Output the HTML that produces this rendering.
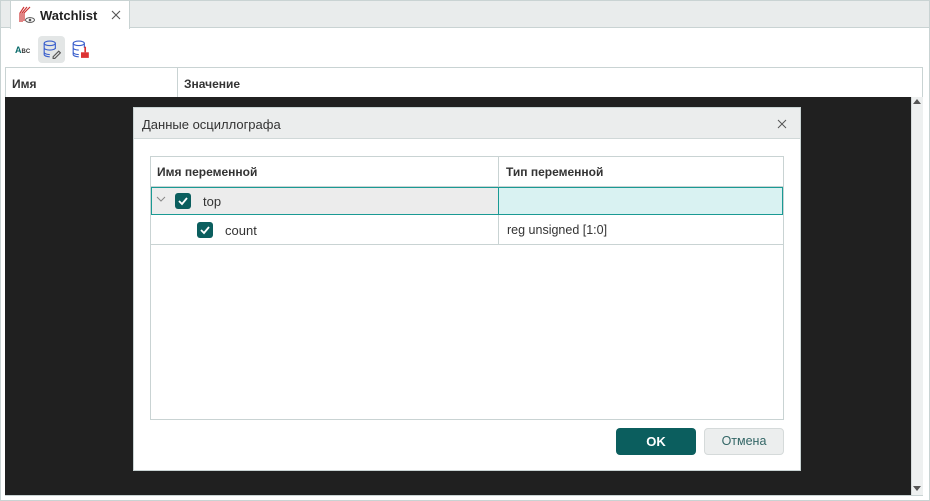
<!DOCTYPE html><html><head><meta charset="utf-8"><style>
*{box-sizing:border-box;margin:0;padding:0}
body{width:930px;height:501px;background:#fff;font-family:"Liberation Sans",sans-serif;font-size:12px;color:#333;position:relative;overflow:hidden}
.a{position:absolute}
</style></head><body>
<div class="a" style="left:0;top:0;width:930px;height:501px;border:1px solid #c9d3d3"></div>
<div class="a" style="left:1px;top:1px;width:928px;height:27px;background:#e9ecec;border-bottom:1px solid #c9d3d3"></div>
<div class="a" style="left:10px;top:1px;width:120px;height:28px;background:#fff;border-left:1px solid #c9d3d3;border-right:1px solid #c9d3d3"></div>
<svg class="a" style="left:19px;top:6px" width="18" height="18" viewBox="0 0 18 18"><path d="M5 1 L1 7 L1 16 M8 1 L3 7 L3 16 M11 1 L5 7 L5 15" stroke="#c33" stroke-width="1.2" fill="none"/><ellipse cx="11" cy="14" rx="4.5" ry="2.4" fill="none" stroke="#555"/><circle cx="11" cy="14" r="1.3" fill="#555"/></svg>
<div class="a" style="left:40px;top:8px;font-weight:bold;font-size:13px;color:#222">Watchlist</div>
<svg class="a" style="left:111px;top:10px" width="10" height="10"><path d="M1 1l8 8M9 1l-8 8" stroke="#555" stroke-width="1.1"/></svg>
<div class="a" style="left:15px;top:45px;font-size:9px;font-weight:bold;color:#0a6b6b">A<span style="font-size:6px;color:#333">BC</span></div>
<div class="a" style="left:38px;top:36px;width:27px;height:27px;background:#e3e6e6;border-radius:4px"></div>
<svg class="a" style="left:43px;top:40px" width="18" height="19" viewBox="0 0 16 17"><ellipse cx="6" cy="3" rx="5" ry="2" fill="none" stroke="#3a5fcd"/><path d="M1 3v10c0 1 2 2 5 2M11 3v5M1 7c0 1 2 2 5 2s5-1 5-2M1 11c0 1 2 2 5 2" fill="none" stroke="#3a5fcd"/><path d="M9 15l5-5 1.5 1.5-5 5H9z" fill="none" stroke="#555"/></svg>
<svg class="a" style="left:72px;top:40px" width="18" height="19" viewBox="0 0 16 17"><ellipse cx="6" cy="3" rx="5" ry="2" fill="none" stroke="#3a5fcd"/><path d="M1 3v10c0 1 2 2 5 2M11 3v4M1 7c0 1 2 2 5 2M1 11c0 1 2 2 5 2" fill="none" stroke="#3a5fcd"/><rect x="8" y="11" width="7" height="5" fill="#d33"/><rect x="11" y="6" width="1.5" height="5" fill="#d33"/></svg>
<div class="a" style="left:5px;top:67px;width:918px;height:31px;border:1px solid #c9d3d3;background:#fff"></div>
<div class="a" style="left:177px;top:68px;width:1px;height:29px;background:#c9d3d3"></div>
<div class="a" style="left:12px;top:77px;font-weight:bold;color:#333">Имя</div>
<div class="a" style="left:184px;top:77px;font-weight:bold;color:#333">Значение</div>
<div class="a" style="left:5px;top:97px;width:906px;height:399px;background:#202020"></div>
<div class="a" style="left:911px;top:97px;width:12px;height:399px;background:#eef0f0;border-left:1px solid #d5dada"></div>
<div class="a" style="left:913px;top:99px;width:0;height:0;border:4px solid transparent;border-bottom:5px solid #555;border-top:0"></div>
<div class="a" style="left:913px;top:486px;width:0;height:0;border:4px solid transparent;border-top:5px solid #555;border-bottom:0"></div>
<div class="a" style="left:5px;top:495px;width:918px;height:1px;background:#c9d3d3"></div>
<div class="a" style="left:133px;top:107px;width:668px;height:364px;background:#fff;border:1px solid #c9d3d3"></div>
<div class="a" style="left:134px;top:108px;width:666px;height:31px;background:#ebeded;border-bottom:1px solid #d0d8d8"></div>
<div class="a" style="left:142px;top:117px;font-size:13px;color:#333">Данные осциллографа</div>
<svg class="a" style="left:777px;top:119px" width="10" height="10"><path d="M1 1l8 8M9 1l-8 8" stroke="#555" stroke-width="1"/></svg>
<div class="a" style="left:150px;top:156px;width:634px;height:264px;border:1px solid #c9d3d3"></div>
<div class="a" style="left:151px;top:186px;width:632px;height:1px;background:#c9d3d3"></div>
<div class="a" style="left:498px;top:157px;width:1px;height:87px;background:#c9d3d3"></div>
<div class="a" style="left:157px;top:165px;font-weight:bold">Имя переменной</div>
<div class="a" style="left:506px;top:165px;font-weight:bold">Тип переменной</div>
<div class="a" style="left:151px;top:187px;width:632px;height:28px;background:#ececec;border:1px solid #1a9a94"></div>
<div class="a" style="left:499px;top:188px;width:283px;height:26px;background:#d9f2f2"></div>
<div class="a" style="left:498px;top:187px;width:1px;height:28px;background:#1a9a94"></div>
<svg class="a" style="left:156px;top:196px" width="10" height="7"><path d="M1 1l4 4 4-4" fill="none" stroke="#888"/></svg>
<div class="a" style="left:175px;top:193px;width:16px;height:16px;background:#0b5e5e;border-radius:3px"></div>
<svg class="a" style="left:175px;top:193px" width="16" height="16"><path d="M4 8l3 3 5-6" fill="none" stroke="#fff" stroke-width="1.8"/></svg>
<div class="a" style="left:203px;top:194px;font-size:13px">top</div>
<div class="a" style="left:151px;top:244px;width:632px;height:1px;background:#c9d3d3"></div>
<div class="a" style="left:197px;top:222px;width:16px;height:16px;background:#0b5e5e;border-radius:3px"></div>
<svg class="a" style="left:197px;top:222px" width="16" height="16"><path d="M4 8l3 3 5-6" fill="none" stroke="#fff" stroke-width="1.8"/></svg>
<div class="a" style="left:225px;top:223px;font-size:13px">count</div>
<div class="a" style="left:507px;top:223px;font-size:12.5px">reg unsigned [1:0]</div>
<div class="a" style="left:616px;top:428px;width:80px;height:27px;background:#0b5e5e;border-radius:4px;color:#fff;font-weight:bold;font-size:13px;text-align:center;line-height:27px">OK</div>
<div class="a" style="left:704px;top:428px;width:80px;height:27px;background:#eceeee;border:1px solid #d5dada;border-radius:4px;color:#336666;font-size:12.5px;text-align:center;line-height:25px">Отмена</div>
</body></html>
